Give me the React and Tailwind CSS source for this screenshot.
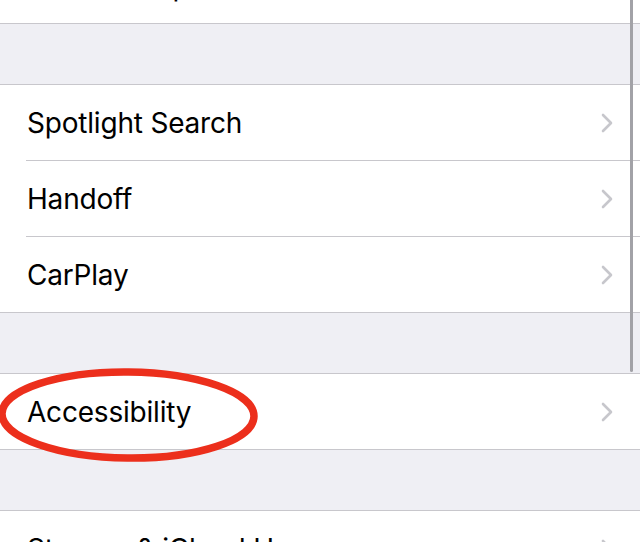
import React from 'react';

// --- Settings list (iOS "General" screen, scrolled) ---

const font = { fontFamily: 'Inter, "Noto Sans", sans-serif' };

function Chevron() {
  return (
    <svg width="14" height="20" viewBox="0 0 14 20" className="shrink-0">
      <path d="M3 2 L11 10 L3 18" fill="none" stroke="#c7c7cc" strokeWidth="2.6" strokeLinecap="round" strokeLinejoin="round" />
    </svg>
  );
}

function Row({ label }) {
  return (
    <div className="flex h-[75px] items-center justify-between pl-[27px] pr-[26px]">
      <span className="text-[28px] tracking-[-0.2px] text-black">{label}</span>
      <Chevron />
    </div>
  );
}

function Group({ rows, top = true }) {
  return (
    <div className={`bg-white border-b border-[#c8c7cc] ${top ? 'border-t' : ''}`}>
      {rows.map((label, i) => (
        <React.Fragment key={label}>
          {i > 0 && <div className="ml-[26px] h-px bg-[#c8c7cc]" />}
          <Row label={label} />
        </React.Fragment>
      ))}
    </div>
  );
}

export default function App() {
  return (
    <div className="relative h-[542px] w-[640px] overflow-hidden bg-[#efeff4]" style={font}>
      <div className="-mt-[52px] flex flex-col gap-[60px]">
        <Group rows={['Software Update']} top={false} />
        <Group rows={['Spotlight Search', 'Handoff', 'CarPlay']} />
        <Group rows={['Accessibility']} />
        <Group rows={['Storage & iCloud Usage']} />
      </div>

      {/* scroll indicator */}
      <div className="absolute left-[630px] top-[-10px] h-[382px] w-[3px] rounded-full bg-[#a2a2a7]" />

      {/* red marker circle */}
      <svg className="absolute left-[-5px] top-[364px]" width="268" height="102" viewBox="0 0 268 102">
        <ellipse cx="133" cy="51" rx="126" ry="43" fill="none" stroke="#ec2f1c" strokeWidth="7.5" transform="rotate(0.6 133 51)" />
      </svg>
    </div>
  );
}
